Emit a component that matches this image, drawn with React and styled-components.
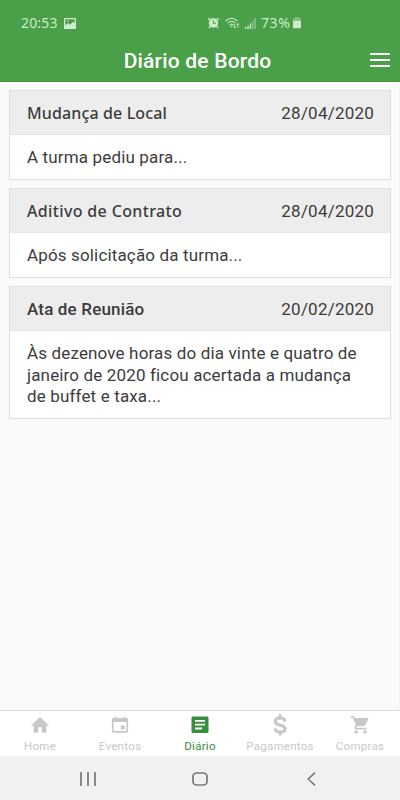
import React from "react";
import styled, { createGlobalStyle } from "styled-components";

const GlobalStyle = createGlobalStyle`
  * { box-sizing: border-box; }
  body { margin: 0; background: #fafafa; font-family: Roboto, "Noto Sans", sans-serif; }
`;

const Screen = styled.div`
  width: 400px;
  height: 800px;
  display: flex;
  flex-direction: column;
  background: #fafafa;
  color: #3c3c3c;
  overflow: hidden;
`;

const Header = styled.header`
  height: 82px;
  flex: none;
  background: #4a9f49;
  border-bottom: 1px solid #3f943f;
  color: #fff;
`;

const StatusBar = styled.div`
  height: 40px;
  padding: 6px 99px 0 21px;
  display: flex;
  align-items: center;
  color: #cdebcb;
  font: 400 14px/18px "Noto Sans", sans-serif;
  svg { display: block; flex: none; }
`;

const StatusText = styled.span`
  letter-spacing: ${(p) => p.$spacing || "0"};
  width: ${(p) => p.$width};
  white-space: nowrap;
`;

const StatusGroup = styled.div`
  display: flex;
  align-items: center;
  gap: 5px;
  margin-left: auto;
`;

const TitleBar = styled.div`
  height: 42px;
  display: grid;
  grid-template-columns: 1fr auto 1fr;
  align-items: center;
  padding: 0 10px;
`;

const Title = styled.h1`
  grid-column: 2;
  margin: 0;
  padding: 0 5px 1px 0;
  font: 500 21px/26px Roboto, sans-serif;
  letter-spacing: 0.2px;
`;

const MenuButton = styled.button`
  justify-self: end;
  border: 0;
  padding: 0 0 2px;
  background: none;
  color: #fff;
  svg { display: block; }
`;

const List = styled.main`
  flex: 1;
  padding: 8px 8px 8px 9px;
  display: flex;
  flex-direction: column;
  gap: 8px;
  border-right: 1px solid #f4f4f4;
`;

const Card = styled.article`
  background: #fff;
  border: 1px solid #dedede;
`;

const CardHead = styled.div`
  height: 44px;
  padding: 1px 17px 0;
  display: flex;
  align-items: center;
  justify-content: space-between;
  background: #ededed;
  border-bottom: 1px solid #e6e6e6;
`;

const CardTitle = styled.h2`
  margin: 0;
  font: 500 ${(p) => p.$size}/22px ${(p) => p.$font}, sans-serif;
  letter-spacing: ${(p) => p.$spacing};
`;

const CardDate = styled.time`
  font: 400 17px/22px Roboto, sans-serif;
  letter-spacing: 0.22px;
  margin-right: -1px;
`;

const CardBody = styled.p`
  margin: 0;
  padding: 12px 17px 10.4px;
  font: 400 17px/21.6px Roboto, sans-serif;
  letter-spacing: 0.15px;
`;

const BodyLine = styled.span`
  display: block;
  white-space: nowrap;
`;

const Tabs = styled.nav`
  height: 46px;
  flex: none;
  display: grid;
  grid-template-columns: repeat(5, 80px);
  background: #fff;
  border-top: 1px solid #dedede;
`;

const Tab = styled.a`
  display: flex;
  flex-direction: column;
  align-items: center;
  padding-top: 2px;
  color: ${(p) => (p.$active ? "#388e3c" : "#c8c8c8")};
  svg { display: block; width: 24px; height: 24px; flex: none; }
`;

const TabLabel = styled.span`
  margin-top: 2px;
  font: 400 11.5px/14px Roboto, sans-serif;
  letter-spacing: 0.27px;
  white-space: nowrap;
`;

const SystemNav = styled.div`
  height: 44px;
  flex: none;
  display: grid;
  grid-template-columns: repeat(3, 112px);
  justify-content: center;
  justify-items: center;
  align-items: center;
  padding-top: 1px;
  background: #f1f1f1;
  color: #777;
  svg { display: block; }
`;

const PictureIcon = () => (
  <svg width="12" height="11" viewBox="0 0 12 11">
    <rect x=".65" y=".65" width="10.7" height="9.7" fill="none" stroke="currentColor" strokeWidth="1.3" />
    <path d="M1 7.5 4 5l2.2 1.5L9 3.8l2.4 2V10.5H1z" fill="currentColor" />
    <circle cx="3.7" cy="3" r=".8" fill="currentColor" />
  </svg>
);

const AlarmIcon = () => (
  <svg width="13" height="12" viewBox="0 0 13 12">
    <circle cx="6.5" cy="6" r="4.7" fill="currentColor" />
    <path d="M1 3.1 3.3.9M12 3.1 9.7.9M3.3 9.3 1.8 11M9.7 9.3l1.5 1.7" stroke="currentColor" strokeWidth="1.3" />
    <path d="M6.5 3.2v3h2.6" fill="none" stroke="#4a9f49" strokeWidth="1.1" />
  </svg>
);

const WifiIcon = () => (
  <svg width="15" height="12" viewBox="0 0 15 12" fill="none" stroke="currentColor" strokeWidth="1.1">
    <path d="M.5 4Q6.5-1.4 12.5 4M2.5 6.1Q6.5 2.5 10.5 6.1M4.5 8.1Q6.5 6.3 8.2 8" />
    <path d="m6.5 10.5-1.3-1.6h2.6z" fill="currentColor" stroke="none" />
    <path d="M9.7 7v3.8M8.5 9.6l1.2 1.3 1.2-1.3M12.9 10.5V6.6M11.7 7.9l1.2-1.3 1.2 1.3" strokeWidth=".9" />
  </svg>
);

const SignalIcon = () => (
  <svg width="11" height="11" viewBox="0 0 11 11" fill="currentColor">
    <path d="M0 9h1.4v2H0zM2.4 7.5h1.4V11H2.4zM4.8 5.5h1.4V11H4.8z" />
    <path d="M7.2 3h1.4v8H7.2zM9.4 0h1.4v11H9.4z" opacity=".5" />
  </svg>
);

const BatteryIcon = () => (
  <svg width="8" height="12" viewBox="0 0 8 12" fill="currentColor">
    <path d="M2.2 0h3.6v1.2H8V4H0V1.2h2.2z" opacity=".45" />
    <path d="M0 4h8v7.2H0z" />
  </svg>
);

const MenuIcon = () => (
  <svg width="20" height="14" viewBox="0 0 20 14" fill="currentColor">
    <path d="M0 0h20v2H0zM0 6h20v2H0zM0 12h20v2H0z" />
  </svg>
);

const HomeIcon = () => (
  <svg viewBox="0 0 24 24" fill="currentColor">
    <path d="M10.2 19.8v-5.5h3.6v5.5h4.6v-7.4h2.8L12 3.9l-9.2 8.5h2.8v7.4z" />
  </svg>
);

const EventIcon = () => (
  <svg viewBox="0 0 24 24" fill="currentColor">
    <path fillRule="evenodd" d="M5.7 4.9h1V3.8h1.8v1.1h7V3.8h1.8v1.1h1c1 0 1.8.7 1.8 1.7v11.5c0 1-.8 1.7-1.8 1.7H5.7c-1 0-1.8-.7-1.8-1.7V6.6c0-1 .8-1.7 1.8-1.7zM5.6 9v9.1h12.8V9z" />
    <path d="M12.8 12.4h4v4h-4z" />
  </svg>
);

const DiaryIcon = () => (
  <svg viewBox="0 0 24 24" fill="currentColor">
    <path fillRule="evenodd" d="M5.1 3.5h13.8c.9 0 1.6.7 1.6 1.6v13.4c0 .9-.7 1.6-1.6 1.6H5.1c-.9 0-1.6-.7-1.6-1.6V5.1c0-.9.7-1.6 1.6-1.6zM7 7v1.8h10V7zm0 3.8v1.8h10v-1.8zm0 3.8v1.8h7v-1.8z" />
  </svg>
);

const DollarIcon = () => (
  <svg viewBox="0 0 24 24" fill="none" stroke="currentColor">
    <path d="M16.7 8.5C16.7 6.2 14.8 5 12.1 5 9.4 5 7.4 6.3 7.4 8.4c0 2.3 2 3 4.7 3.7 2.8.7 4.9 1.4 4.9 3.6 0 2.3-2 3.3-4.7 3.3-3 0-5-1.4-5.1-3.7" strokeWidth="3.2" />
    <path d="M12.1 1.3v4M12.1 18.5v3.9" strokeWidth="3" />
  </svg>
);

const CartIcon = () => (
  <svg viewBox="0 0 24 24">
    <g transform="translate(2 1.6) scale(.88 .87)" fill="currentColor">
      <path d="M7 18c-1.1 0-1.99.9-1.99 2S5.9 22 7 22s2-.9 2-2-.9-2-2-2zM1 2v2h2l3.6 7.59-1.35 2.45c-.16.28-.25.61-.25.96 0 1.1.9 2 2 2h12v-2H7.42c-.14 0-.25-.11-.25-.25l.03-.12.9-1.63h7.45c.75 0 1.41-.41 1.75-1.03l3.58-6.49c.08-.14.12-.31.12-.48 0-.55-.45-1-1-1H5.21l-.94-2H1zm16 16c-1.1 0-1.99.9-1.99 2s.89 2 1.99 2 2-.9 2-2-.9-2-2-2z" />
    </g>
  </svg>
);

const entries = [
  { title: "Mudança de Local", font: '"Noto Sans"', size: "16px", spacing: "0.13px", date: "28/04/2020", lines: ["A turma pediu para..."] },
  { title: "Aditivo de Contrato", font: '"Noto Sans"', size: "16px", spacing: "0.35px", date: "28/04/2020", lines: ["Após solicitação da turma..."] },
  {
    title: "Ata de Reunião",
    font: "Roboto",
    size: "17px",
    spacing: "0.17px",
    date: "20/02/2020",
    lines: ["Às dezenove horas do dia vinte e quatro de", "janeiro de 2020 ficou acertada a mudança", "de buffet e taxa..."],
  },
];

const tabs = [
  { label: "Home", Icon: HomeIcon },
  { label: "Eventos", Icon: EventIcon },
  { label: "Diário", Icon: DiaryIcon, active: true },
  { label: "Pagamentos", Icon: DollarIcon },
  { label: "Compras", Icon: CartIcon },
];

export default function App() {
  return (
    <Screen>
      <GlobalStyle />
      <Header>
        <StatusBar>
          <StatusText $width="43px" $spacing="0.15px">20:53</StatusText>
          <PictureIcon />
          <StatusGroup>
            <AlarmIcon />
            <WifiIcon />
            <SignalIcon />
            <StatusText $width="27px" $spacing="0.6px">73%</StatusText>
            <BatteryIcon />
          </StatusGroup>
        </StatusBar>
        <TitleBar>
          <Title>Diário de Bordo</Title>
          <MenuButton aria-label="Menu"><MenuIcon /></MenuButton>
        </TitleBar>
      </Header>
      <List>
        {entries.map((e) => (
          <Card key={e.title}>
            <CardHead>
              <CardTitle $font={e.font} $size={e.size} $spacing={e.spacing}>{e.title}</CardTitle>
              <CardDate>{e.date}</CardDate>
            </CardHead>
            <CardBody>
              {e.lines.map((l) => <BodyLine key={l}>{l}</BodyLine>)}
            </CardBody>
          </Card>
        ))}
      </List>
      <Tabs>
        {tabs.map(({ label, Icon, active }) => (
          <Tab key={label} $active={active}>
            <Icon />
            <TabLabel>{label}</TabLabel>
          </Tab>
        ))}
      </Tabs>
      <SystemNav>
        <svg width="16" height="14" viewBox="0 0 16 14"><path d="M1 0v14M8 0v14M15 0v14" stroke="currentColor" strokeWidth="1.7" /></svg>
        <svg width="16" height="14" viewBox="0 0 16 14"><rect x="1" y="1" width="14" height="12" rx="3.5" fill="none" stroke="currentColor" strokeWidth="1.7" /></svg>
        <svg width="10" height="14" viewBox="0 0 10 14"><path d="M8 .6 1.2 7 8 13.4" fill="none" stroke="currentColor" strokeWidth="1.5" /></svg>
      </SystemNav>
    </Screen>
  );
}
